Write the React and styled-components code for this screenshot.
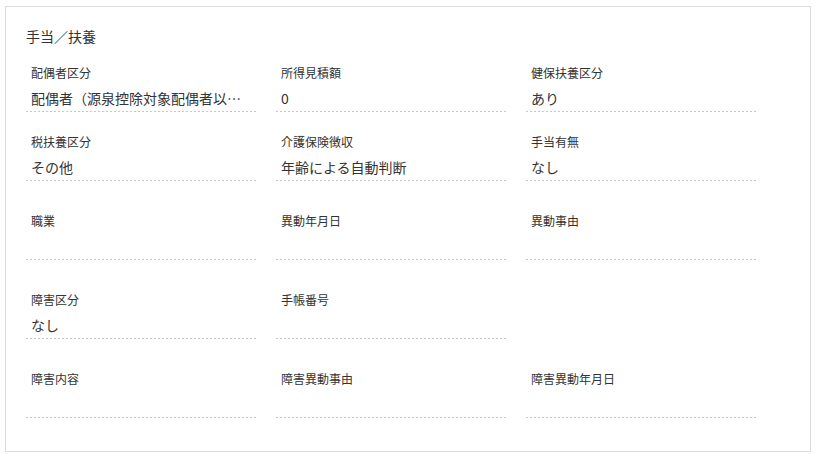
import styled, { createGlobalStyle } from 'styled-components';

const rows = [
  {
    spaced: false,
    fields: [
      { label: '配偶者区分', value: '配偶者（源泉控除対象配偶者以外）' },
      { label: '所得見積額', value: '0' },
      { label: '健保扶養区分', value: 'あり' },
    ],
  },
  {
    spaced: false,
    fields: [
      { label: '税扶養区分', value: 'その他' },
      { label: '介護保険徴収', value: '年齢による自動判断' },
      { label: '手当有無', value: 'なし' },
    ],
  },
  {
    spaced: true,
    fields: [
      { label: '職業', value: '' },
      { label: '異動年月日', value: '' },
      { label: '異動事由', value: '' },
    ],
  },
  {
    spaced: true,
    fields: [
      { label: '障害区分', value: 'なし' },
      { label: '手帳番号', value: '' },
    ],
  },
  {
    spaced: true,
    fields: [
      { label: '障害内容', value: '' },
      { label: '障害異動事由', value: '' },
      { label: '障害異動年月日', value: '' },
    ],
  },
];

const App = () => (
  <>
    <GlobalStyle />
    <StyledCard>
      <StyledTitle>手当／扶養</StyledTitle>
      {rows.map((row, i) => (
        <StyledRow key={i} $spaced={row.spaced}>
          {row.fields.map((field) => (
            <StyledField key={field.label}>
              <StyledLabel>{field.label}</StyledLabel>
              <StyledValue>{field.value}</StyledValue>
            </StyledField>
          ))}
        </StyledRow>
      ))}
    </StyledCard>
  </>
);

const GlobalStyle = createGlobalStyle`
  body {
    margin: 0;
    padding: 6px 8px 0 5px;
    background: #fff;
    font-family: "Noto Sans CJK JP", "Noto Sans", sans-serif;
    color: #333;
  }
`;

const StyledCard = styled.section`
  width: 806px;
  box-sizing: border-box;
  padding: 20px 20px 33px;
  border: 1px solid #dcdcdc;
  box-shadow: 0 1px 1px rgba(0, 0, 0, 0.05);
  background: #fff;
`;

const StyledTitle = styled.h2`
  margin: 0 0 19px;
  font-size: 14px;
  font-weight: 400;
  line-height: 18px;
  color: #333;
`;

const StyledRow = styled.div`
  display: grid;
  grid-template-columns: repeat(3, 230px);
  column-gap: 20px;
  margin-top: ${(props) => (props.$spaced ? '31px' : '21px')};

  &:first-of-type {
    margin-top: 0;
  }
`;

const StyledField = styled.div`
  padding-bottom: 1px;
  background-image: linear-gradient(to right, #c8c8c8 50%, transparent 50%);
  background-size: 4px 1px;
  background-repeat: repeat-x;
  background-position: left bottom;
`;

const StyledLabel = styled.div`
  padding: 0 5px;
  font-size: 12px;
  line-height: 18px;
  margin-bottom: 6px;
  color: #333;
`;

const StyledValue = styled.div`
  padding: 0 5px 3px;
  height: 20px;
  font-size: 14px;
  line-height: 20px;
  color: #333;
  white-space: nowrap;
  overflow: hidden;
  text-overflow: ellipsis;
`;

export default App;
